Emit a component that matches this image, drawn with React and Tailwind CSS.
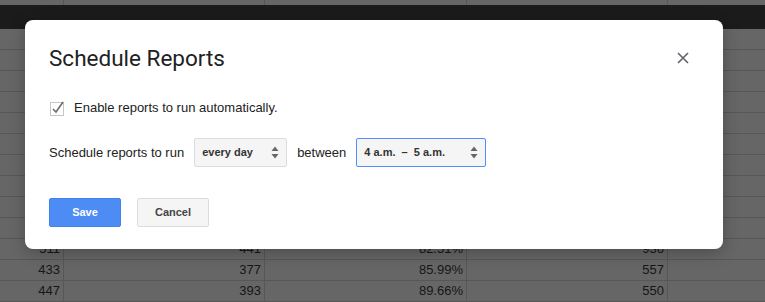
import React from 'react';

const rows = Array.from({ length: 13 }, (_, i) => {
  if (i === 10) return ['511', '441', '82.51%', '936'];
  if (i === 11) return ['433', '377', '85.99%', '557'];
  if (i === 12) return ['447', '393', '89.66%', '550'];
  return ['', '', '', ''];
});

function SheetRow({ cells }) {
  return (
    <div className="flex h-[21px] border-b border-[#575757] text-[13px] leading-[20px] text-[#161616]">
      <div className="w-[64px] shrink-0 border-r border-[#575757] pr-[3px] text-right">{cells[0]}</div>
      <div className="w-[201px] shrink-0 border-r border-[#575757] pr-[3px] text-right">{cells[1]}</div>
      <div className="w-[202px] shrink-0 border-r border-[#575757] pr-[3px] text-right">{cells[2]}</div>
      <div className="w-[201px] shrink-0 border-r border-[#575757] pr-[3px] text-right">{cells[3]}</div>
      <div className="flex-1" />
    </div>
  );
}

function Arrows() {
  return (
    <svg width="8" height="13" viewBox="0 0 8 13" className="text-[#666]">
      <path d="M4 0.5 L7.5 5 L0.5 5 Z" fill="currentColor" />
      <path d="M4 12.5 L7.5 8 L0.5 8 Z" fill="currentColor" />
    </svg>
  );
}

function Select({ children, focused, width }) {
  return (
    <div
      className={`flex h-[29px] items-center justify-between rounded-[2px] bg-[#f5f5f5] pl-[7px] pr-[7px] text-[11px] font-bold text-[#333] ${width} ${
        focused ? 'border border-[#4d90fe]' : 'border border-[#dcdcdc]'
      }`}
    >
      <span className="whitespace-pre">{children}</span>
      <Arrows />
    </div>
  );
}

export default function App() {
  return (
    <div className="relative h-[302px] w-[765px] overflow-hidden bg-[#666666] font-['Liberation_Sans',Arial,sans-serif]">
      {/* sheet behind the overlay */}
      <div className="flex h-[5px]">
        <div className="w-[64px] border-r border-[#575757]" />
        <div className="w-[201px] border-r border-[#575757]" />
        <div className="w-[202px] border-r border-[#575757]" />
        <div className="w-[201px] border-r border-[#575757]" />
      </div>
      <div className="h-[24px] bg-[#1b1b1b]" />
      {rows.map((r, i) => (
        <SheetRow key={i} cells={r} />
      ))}

      {/* dialog */}
      <div className="absolute left-[25px] top-[20px] h-[229px] w-[698px] rounded-[8px] bg-white shadow-[0_4px_16px_rgba(0,0,0,0.25)]">
        <div className="flex flex-col pl-[24px] pr-[33px] pt-[24px]">
          <div className="flex items-center justify-between">
            <h1 className="font-['Roboto',sans-serif] text-[22.5px] leading-[28px] font-normal text-[#202124]">
              Schedule Reports
            </h1>
            <svg width="12" height="12" viewBox="0 0 12 12" className="mr-[1px]">
              <path d="M1 1 L11 11 M11 1 L1 11" stroke="#5f6368" strokeWidth="1.6" />
            </svg>
          </div>

          <label className="mt-[26px] flex h-[20px] items-center gap-[8px] text-[13px] text-[#222]">
            <svg width="16" height="16" viewBox="0 0 16 16" className="ml-[1px]">
              <rect x="0.5" y="2.5" width="13" height="13" fill="#fff" stroke="#c6c6c6" />
              <path d="M3 9 L6 12 L13 2" fill="none" stroke="#6b6b6b" strokeWidth="1.6" />
            </svg>
            Enable reports to run automatically.
          </label>

          <div className="mt-[20px] flex items-center text-[13px] text-[#222]">
            <span>Schedule reports to run</span>
            <div className="ml-[10px]">
              <Select width="w-[93px]">every day</Select>
            </div>
            <span className="ml-[10px]">between</span>
            <div className="ml-[10px]">
              <Select width="w-[130px]" focused>
                {'4 a.m.  –  5 a.m.'}
              </Select>
            </div>
          </div>

          <div className="mt-[31px] flex gap-[16px]">
            <button className="h-[29px] w-[72px] rounded-[2px] border border-[#4282ec] bg-[#4d8cf4] text-[11px] font-bold text-white">
              Save
            </button>
            <button className="h-[29px] w-[72px] rounded-[2px] border border-[#dcdcdc] bg-[#f5f5f5] text-[11px] font-bold text-[#444]">
              Cancel
            </button>
          </div>
        </div>
      </div>
    </div>
  );
}
